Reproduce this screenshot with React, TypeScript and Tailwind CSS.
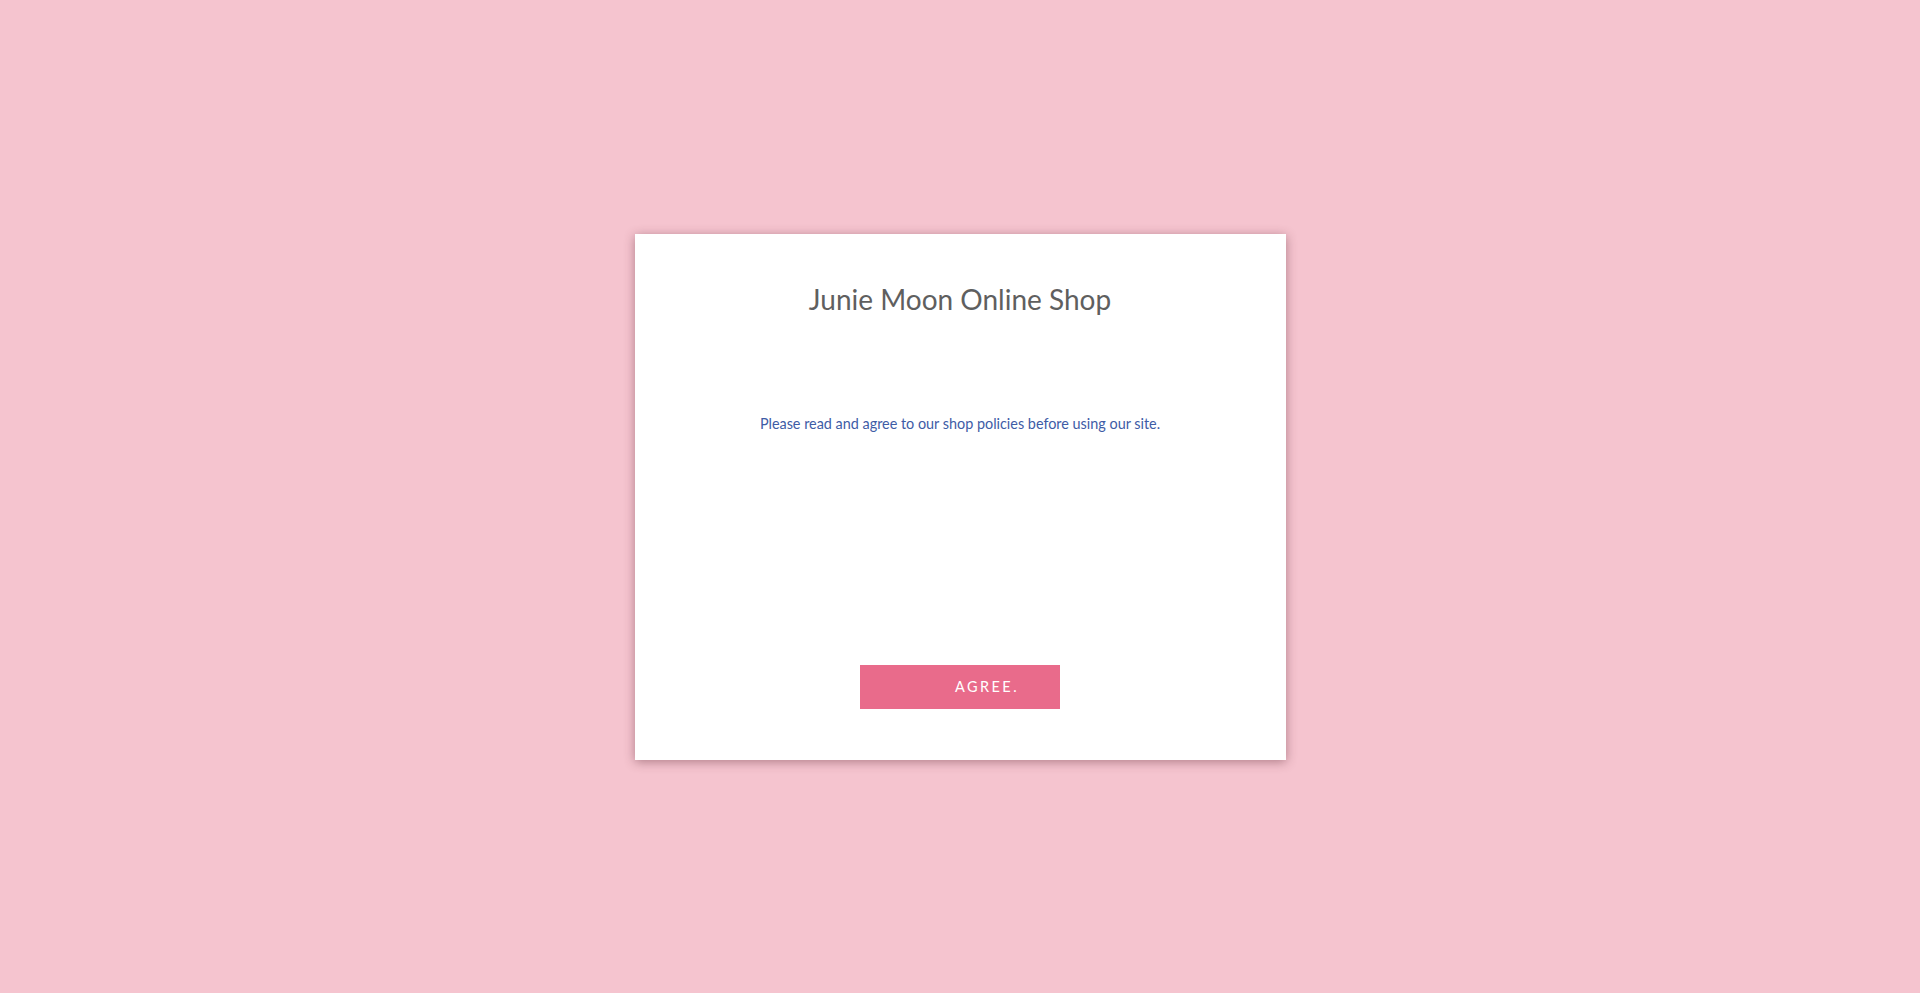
export default function App() {
  return (
    <div className="min-h-screen w-full bg-[#f5c4cf] flex items-center justify-center font-['Lato','Open_Sans',sans-serif]">
      <div className="w-[651px] h-[526px] bg-white shadow-[0_2px_10px_rgba(90,40,50,0.45)] flex flex-col items-center">
        <h1 className="mt-[47px] h-[36px] leading-[36px] text-[28px] text-[#5f5f5f] font-normal">
          Junie Moon Online Shop
        </h1>
        <p className="mt-[97px] h-[20px] leading-[20px] text-[14.4px] text-[#3e5ca6]">
          Please read and agree to our shop policies before using our site.
        </p>
        <button className="mt-[231px] w-[200px] h-[44px] bg-[#e96b8b] text-white text-[14.5px] tracking-[0.17em] pl-[54px] flex items-center justify-center">
          AGREE.
        </button>
      </div>
    </div>
  );
}
